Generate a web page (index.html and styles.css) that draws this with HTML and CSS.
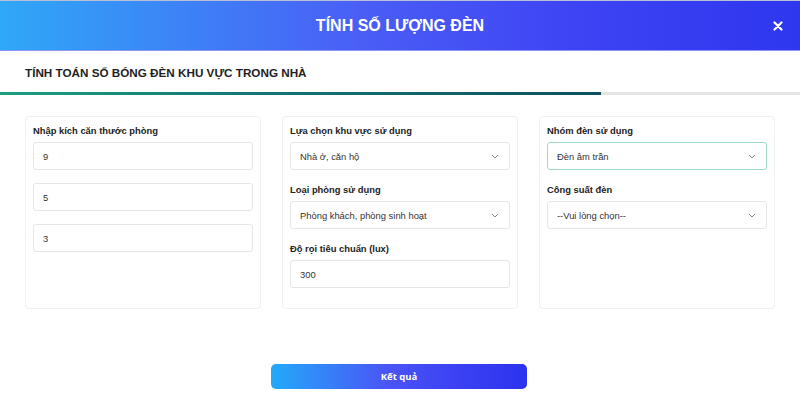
FILE: index.html
```html
<!DOCTYPE html>
<html lang="vi">
<head>
<meta charset="utf-8">
<title>Tính số lượng đèn</title>
<link rel="stylesheet" href="styles.css">
</head>
<body>
<div class="modal">
  <header class="header">
    <span></span>
    <h1 class="title">TÍNH SỐ LƯỢNG ĐÈN</h1>
    <button class="close" aria-label="Đóng">
      <svg width="10" height="10" viewBox="0 0 10 10"><path d="M1.5 1.5 L8.5 8.5 M8.5 1.5 L1.5 8.5" stroke="#fff" stroke-width="2.2" stroke-linecap="round"/></svg>
    </button>
  </header>
  <div class="subtitle">TÍNH TOÁN SỐ BÓNG ĐÈN KHU VỰC TRONG NHÀ</div>
  <div class="progress"><div class="progress-fill"></div></div>

  <div class="cards">
    <section class="card">
      <div class="label">Nhập kích căn thước phòng</div>
      <div class="field stack">9</div>
      <div class="field stack">5</div>
      <div class="field stack">3</div>
    </section>

    <section class="card">
      <div class="group">
        <div class="label">Lựa chọn khu vực sử dụng</div>
        <div class="field select"><span>Nhà ở, căn hộ</span><svg class="chev" width="8" height="5" viewBox="0 0 8 5"><path d="M1 1 L4 4 L7 1" fill="none" stroke="#8a8a8a" stroke-width="1"/></svg></div>
      </div>
      <div class="group">
        <div class="label">Loại phòng sử dụng</div>
        <div class="field select"><span>Phòng khách, phòng sinh hoạt</span><svg class="chev" width="8" height="5" viewBox="0 0 8 5"><path d="M1 1 L4 4 L7 1" fill="none" stroke="#8a8a8a" stroke-width="1"/></svg></div>
      </div>
      <div class="group">
        <div class="label">Độ rọi tiêu chuẩn (lux)</div>
        <div class="field">300</div>
      </div>
    </section>

    <section class="card">
      <div class="group">
        <div class="label">Nhóm đèn sử dụng</div>
        <div class="field select focus"><span>Đèn âm trần</span><svg class="chev" width="8" height="5" viewBox="0 0 8 5"><path d="M1 1 L4 4 L7 1" fill="none" stroke="#8a8a8a" stroke-width="1"/></svg></div>
      </div>
      <div class="group">
        <div class="label">Công suất đèn</div>
        <div class="field select"><span>--Vui lòng chọn--</span><svg class="chev" width="8" height="5" viewBox="0 0 8 5"><path d="M1 1 L4 4 L7 1" fill="none" stroke="#8a8a8a" stroke-width="1"/></svg></div>
      </div>
    </section>
  </div>

  <div class="actions">
    <button class="submit">Kết quả</button>
  </div>
</div>
</body>
</html>
```

FILE: styles.css
```css
* { box-sizing: border-box; }
html, body { margin: 0; padding: 0; background: #fff; }
body {
  font-family: "Liberation Sans", Arial, sans-serif;
  color: #222;
  width: 800px;
  height: 402px;
  overflow: hidden;
}
.header {
  height: 51px;
  display: grid;
  grid-template-columns: 1fr auto 1fr;
  align-items: center;
  background: linear-gradient(90deg, #2fa8f7 0%, #4a5ef6 45%, #3f45f4 70%, #2e36ef 100%);
  border-top: 1px solid #b9bfd6;
  border-bottom: 1px solid #8f96f4;
}
.title {
  margin: 0;
  font-size: 16px;
  font-weight: bold;
  color: #fff;
}
.close {
  justify-self: end;
  margin-right: 17px;
  background: none;
  border: 0;
  padding: 0;
  width: 10px;
  height: 10px;
  display: flex;
  cursor: pointer;
}
.subtitle {
  height: 41px;
  display: flex;
  align-items: center;
  padding-left: 25px;
  padding-top: 1px;
  font-size: 11.7px;
  font-weight: bold;
  color: #1e1e1e;
}
.progress {
  height: 3px;
  background: #e3e3e3;
}
.progress-fill {
  width: 601px;
  height: 100%;
  background: linear-gradient(90deg, #1b9f7c 0%, #14777a 40%, #0d4f60 100%);
}
.cards {
  margin-top: 21px;
  padding: 0 25px;
  display: grid;
  grid-template-columns: repeat(3, 1fr);
  gap: 21px;
}
.card {
  border: 1px solid #f0f0f0;
  border-radius: 4px;
  padding: 4px 7px 20px;
  background: #fff;
}
.label {
  font-size: 9.4px;
  font-weight: bold;
  line-height: 19px;
  color: #222;
  margin-bottom: 2px;
}
.group + .group { margin-top: 10px; }
.field {
  height: 28px;
  border: 1px solid #e6e6e6;
  border-radius: 3px;
  padding: 0 9px;
  display: flex;
  align-items: center;
  font-size: 9.4px;
  color: #333;
  background: #fff;
}
.field.stack + .field.stack { margin-top: 13px; }
.select { justify-content: space-between; padding-right: 10px; }
.focus { border-color: #9edac6; }
.chev { flex: none; }
.actions {
  display: flex;
  justify-content: center;
  margin-top: 55px;
  padding-right: 2px;
}
.submit {
  width: 256px;
  height: 25px;
  border: 0;
  border-radius: 5px;
  background: linear-gradient(90deg, #23aaf9 0%, #4a55f6 45%, #3d43f3 70%, #2c33ee 100%);
  color: #fff;
  font-family: "Open Sans", "Liberation Sans", sans-serif;
  font-weight: bold;
  font-size: 9.5px;
  cursor: pointer;
}
```
